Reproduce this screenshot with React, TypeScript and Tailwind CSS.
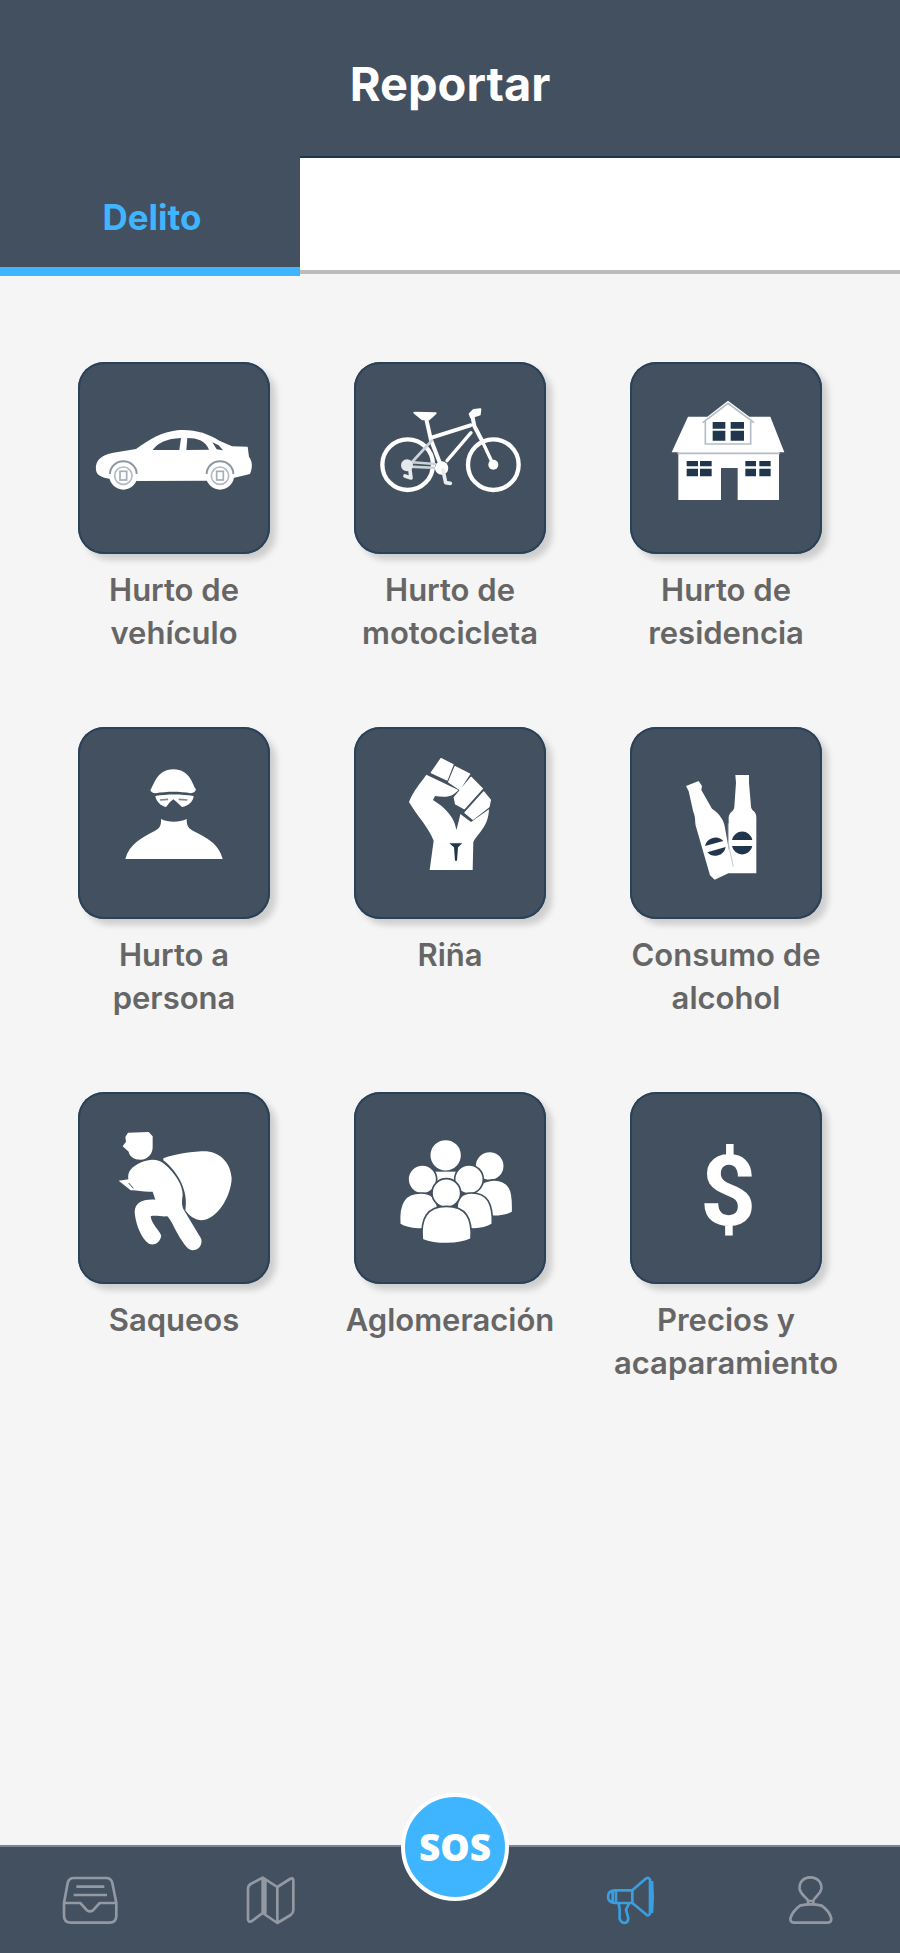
import React from "react";

const DARK = "#43505f";

const CarIcon = () => (
  <svg viewBox="54 66 576 576" className="w-full" fill="#fff">
    <path d="M108 390C104 362 124 344 160 338L228 327C268 298 306 276 352 271C402 267 442 280 478 302L516 319L563 320L567 350C578 365 578 382 570 402L520 414L440 422L235 423L150 417C124 412 110 406 108 390Z" />
    <path fill={DARK} d="M278 330C294 308 320 296 363 294L358 330ZM382 294C412 294 438 303 447 329L379 330ZM457 307L476 316L489 331L470 328Z" />
    {[190, 480].map((cx) => (
      <g key={cx}>
        <circle cx={cx} cy={407} r={42} />
        <path d={`M${cx - 40} 402a40 38 0 0 1 80 0`} fill="none" stroke="#8d97a3" strokeWidth={6} />
        <circle cx={cx} cy={407} r={26} fill="none" stroke="#b3bac3" strokeWidth={5} />
        <rect x={cx - 10} y={394} width={20} height={26} fill="none" stroke="#a5adb7" strokeWidth={5} />
      </g>
    ))}
  </svg>
);

const BikeIcon = () => (
  <svg viewBox="57 66 576 576" className="w-full" fill="none" stroke="#fff" strokeLinecap="round" strokeLinejoin="round">
    <circle cx={218} cy={374} r={76} strokeWidth={13} />
    <circle cx={475} cy={374} r={76} strokeWidth={13} />
    <path strokeWidth={12} d="M274 238L288 300L322 388M292 292L406 256M412 228L418 258L440 300" />
    <path strokeWidth={10} d="M408 278L336 362M440 300L475 374" />
    <path strokeWidth={8} d="M290 302L226 372M222 380L310 384M222 366L300 372" stroke="#cdd2d8" />
    <path fill="#fff" strokeWidth={6} d="M238 218L302 220L282 238L262 238ZM404 222L416 210L436 208L434 224L408 232Z" />
    <circle cx={216} cy={376} r={18} fill="#e4e7eb" stroke="none" />
    <circle cx={475} cy={374} r={15} fill="#fff" stroke="none" />
    <circle cx={320} cy={384} r={20} fill="#fff" stroke="none" />
    <path strokeWidth={11} d="M224 384L228 414L210 408M324 390L332 428L346 430" stroke="#e8ebee" />
  </svg>
);

const HouseIcon = () => (
  <svg viewBox="90 66 576 576" className="w-full" fill="#fff">
    <path d="M264 230H322L384 182L448 230H511L553 337H215ZM235 334H537V480H413V384H363V480H235Z" />
    <path d="M232 340H540M308 248L384 190L462 248M316 244V312H452V244" fill="none" stroke="#b4bcc5" strokeWidth={5} />
    <g fill="#20364d">
      <path d="M338 246h38v20h-38zM392 246h40v20h-40zM338 272h38v30h-38zM392 272h40v30h-40z" />
      <path d="M260 363h34v16h-34zM300 363h35v16h-35zM260 386h34v23h-34zM300 386h35v23h-35z" />
      <path d="M436 363h32v16h-32zM478 363h34v16h-34zM436 386h32v23h-32zM478 386h34v23h-34z" />
    </g>
  </svg>
);

const PersonIcon = () => (
  <svg viewBox="54 51 576 576" className="w-full" fill="#fff">
    <path d="M271 240C280 232 288 178 340 178C392 178 398 228 408 238C406 246 400 249 392 250C360 244 320 244 287 250C278 249 272 246 271 240Z" />
    <path d="M286 258C320 252 364 252 401 258C400 274 386 288 366 291L350 276L340 268L330 276L318 291C302 288 288 274 286 258Z" />
    <path d="M300 270L324 268M356 268L382 270" stroke="#7c8794" strokeWidth={5} />
    <path d="M303 327C325 338 357 338 380 327C380 350 386 354 400 363C440 384 476 400 488 447H196C208 402 244 384 284 363C298 354 304 350 303 327Z" />
  </svg>
);

const FistIcon = () => (
  <svg viewBox="57 51 576 576" className="w-full" fill="#fff">
    <path
      d="M318 146L354 164L336 210L289 188ZM360 170L404 192L374 238L341 216ZM408 202L442 236L388 296L362 282L358 262ZM446 246L466 270L462 290L414 328L390 308Z"
      stroke="#fff"
      strokeWidth={4}
      strokeLinejoin="round"
    />
    <path d="M274 194L370 240C350 264 328 262 300 258L294 270L320 288C344 310 360 330 364 360C370 340 372 330 376 312L408 336L462 298C460 350 432 366 415 396L413 480H284L296 392C280 350 246 318 222 276C236 240 256 220 274 194Z" />
    <path d="M343 400H382L369 412L366 452H360L357 412Z" fill="#20364d" />
  </svg>
);

const BottlesIcon = () => (
  <svg viewBox="90 51 576 576" className="w-full" fill="#fff">
    <path d="M258 228L296 213L306 228L304 240L336 296C360 312 370 330 374 348L398 484L344 509L330 496L288 350C284 336 288 326 280 306L266 244Z" />
    <path d="M406 195H447V218L453 290C455 304 469 302 469 322V490H386V322C388 304 402 306 403 290L408 218Z" />
    <path d="M385 340V400L400 470" stroke="#c3cad1" strokeWidth={3} fill="none" />
    <g fill="#20364d">
      <path d="M396 390A31 31 0 0 1 457 390ZM396 408A31 31 0 0 0 457 408Z" />
      <path d="M315 408A32 32 0 0 1 370 393ZM322 427A32 32 0 0 0 377 411Z" />
    </g>
  </svg>
);

const ThiefIcon = () => (
  <svg viewBox="54 51 576 576" className="w-full" fill="#fff">
    <path d="M204 173L266 171L278 184V216C278 238 262 254 242 254C222 254 208 244 206 230L188 214L198 200L196 186Z" />
    <path d="M310 250C350 236 396 229 440 229C486 234 512 268 515 310C514 360 474 436 422 436C404 434 388 424 376 406C386 350 356 292 310 256Z" />
    <path d="M244 262C270 250 296 252 312 266C346 294 368 330 368 360C366 376 364 388 370 402L424 492C428 512 414 526 398 526C384 524 376 512 368 500C344 468 338 440 322 424C304 426 288 420 272 424C274 446 296 464 304 482C300 500 288 510 272 508C246 498 226 446 224 410C226 384 244 372 286 374L278 350C248 352 228 344 212 346L176 317L205 313C202 292 212 276 244 262Z" />
    <path d="M206 324L220 340" stroke={DARK} strokeWidth={3} />
  </svg>
);

const GroupIcon = () => (
  <svg viewBox="57 51 576 576" className="w-full" fill="#fff" stroke={DARK} strokeWidth={5}>
    <circle cx={464} cy={273} r={44} />
    <path d="M420 350C436 308 500 304 522 336C534 352 534 380 533 412C510 424 480 426 450 422Z" />
    <circle cx={332} cy={241} r={48} />
    <path d="M300 290H366V330H300Z" stroke="none" />
    <circle cx={262} cy={313} r={43} />
    <circle cx={402} cy={313} r={43} />
    <path d="M194 448C190 384 208 354 258 354C290 354 306 372 308 400V454C270 466 224 466 194 448Z" />
    <path d="M366 400C366 370 380 354 410 354C456 354 474 384 472 448C446 464 410 464 380 458Z" />
    <circle cx={334} cy={354} r={43} />
    <path d="M262 494C256 430 276 394 334 394C394 394 412 430 408 492C370 510 304 510 262 494Z" />
  </svg>
);

const DollarIcon = () => (
  <span className="pt-2 pl-1 font-[Roboto,sans-serif] text-[98px] leading-none font-bold text-white">$</span>
);

interface report {
  label: string;
  icon: React.ReactNode;
}

const reports: report[] = [
  { label: "Hurto de\nvehículo", icon: <CarIcon /> },
  { label: "Hurto de\nmotocicleta", icon: <BikeIcon /> },
  { label: "Hurto de\nresidencia", icon: <HouseIcon /> },
  { label: "Hurto a\npersona", icon: <PersonIcon /> },
  { label: "Riña", icon: <FistIcon /> },
  { label: "Consumo de\nalcohol", icon: <BottlesIcon /> },
  { label: "Saqueos", icon: <ThiefIcon /> },
  { label: "Aglomeración", icon: <GroupIcon /> },
  { label: "Precios y\nacaparamiento", icon: <DollarIcon /> },
];

const navIcon = "size-[60px] fill-none stroke-[#9299a3] stroke-[8]";

const BottomNav = () => {
  return (
    <nav className="grid h-[108px] grid-cols-5 border-t-2 border-t-[#7d858e] bg-[#43505f]">
      <button aria-label="Bandeja" className="flex items-center justify-center">
        <svg viewBox="181 267 180 180" className={navIcon} strokeLinejoin="round">
          <path d="M193 366L204 306Q208 291 222 291H320Q334 291 338 306L350 366V404Q350 425 329 425H214Q193 425 193 404ZM193 366H242L262 388Q271 394 280 388L300 366H350M230 317H314M222 342H322" />
        </svg>
      </button>
      <button aria-label="Mapa" className="flex items-center justify-center">
        <svg viewBox="720 267 180 180" className={navIcon} strokeLinejoin="round">
          <path d="M744 324Q744 314 752 309L788 290L832 318L870 294Q880 288 880 300V388Q880 396 872 402L832 426L788 396L756 420Q744 426 744 414ZM788 290V396M796 296V398M832 318V426" />
        </svg>
      </button>
      <div className="flex items-start justify-center pl-2.5">
        <button className="-mt-[54px] size-[108px] shrink-0 rounded-full border-4 border-white bg-[#3fb5ff] font-['Open_Sans',sans-serif] text-[37px] font-extrabold text-white">
          SOS
        </button>
      </div>
      <button aria-label="Reportar" className="flex items-center justify-center">
        <svg viewBox="660 267 180 180" className="size-[60px] fill-none stroke-[#3a9fe0] stroke-[8]" strokeLinejoin="round">
          <path d="M757 328L796 294Q804 286 810 296V398Q804 408 796 398L757 366M816 300Q820 346 816 396M757 328V366H706Q684 364 684 347Q684 328 706 328H757M708 328V366M698 332V362M716 366L719 386V414Q724 426 734 426Q744 424 745 412L738 386L748 366" />
        </svg>
      </button>
      <button aria-label="Perfil" className="flex items-center justify-center">
        <svg viewBox="1200 267 180 180" className={navIcon} strokeLinejoin="round">
          <path d="M1291 289C1312 289 1326 304 1324 324C1320 344 1302 348 1300 360H1284C1282 348 1262 344 1259 324C1257 304 1270 289 1291 289ZM1284 360V370M1300 360V370M1260 374Q1292 366 1325 374Q1348 390 1354 412Q1354 425 1344 425H1241Q1231 425 1231 412Q1238 390 1260 374Z" />
        </svg>
      </button>
    </nav>
  );
};

const App = () => {
  return (
    <div className="flex min-h-screen flex-col bg-[#f5f5f5] font-[Inter,sans-serif]">
      <header className="bg-[#43505f]">
        <h1 className="pt-14 pb-11 text-center text-[47px] leading-14 font-bold text-white">Reportar</h1>
      </header>

      <div className="grid h-[120px] grid-cols-3">
        <button className="border-b-9 border-b-[#3fb5ff] bg-[#43505f] pt-3 pl-1 text-[35px] font-bold text-[#3fb5ff]">
          Delito
        </button>
        {/* empty side of the tab bar */}
        <div className="col-span-2 mb-0.5 border-t-2 border-b-4 border-t-[#1b3850] border-b-[#bcbcbc] bg-white"></div>
      </div>

      <main className="grid grow grid-cols-3 content-start gap-y-[73px] px-9 pt-[86px] pb-20">
        {reports.map((item) => (
          <button key={item.label} className="flex flex-col items-center gap-3.5">
            <span className="flex size-48 items-center justify-center rounded-[26px] bg-[#43505f] shadow-[6px_6px_6px_rgba(0,0,0,0.16)] inset-ring-2 inset-ring-[#2a4259]">
              {item.icon}
            </span>
            <span className="min-h-[86px] text-[31px] leading-[43px] font-semibold whitespace-pre-line text-[#666]">
              {item.label}
            </span>
          </button>
        ))}
      </main>

      <BottomNav />
    </div>
  );
};

export default App;
